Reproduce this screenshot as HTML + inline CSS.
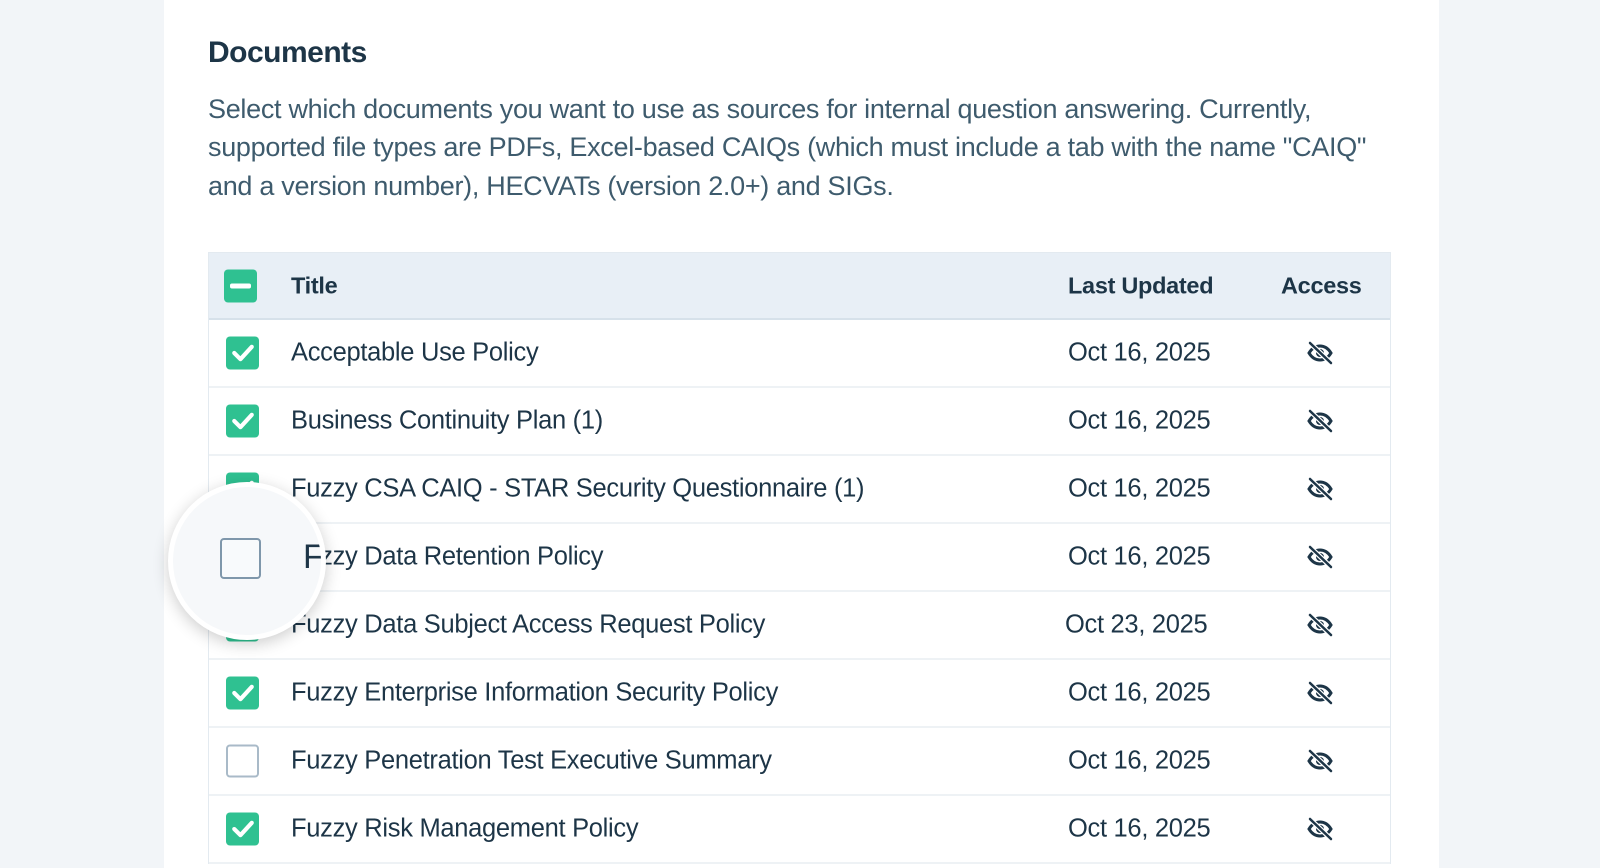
<!DOCTYPE html>
<html><head><style>
*{box-sizing:border-box;margin:0;padding:0}
body{width:1600px;height:868px;overflow:hidden;background:#f2f5f8;font-family:"Liberation Sans",sans-serif;color:#1d3547;position:relative}
.card{position:absolute;left:164px;top:0;width:1275px;height:868px;background:#fff}
h1{position:absolute;left:208px;top:36px;font-size:30px;font-weight:600;letter-spacing:-0.5px;color:#1d3547}
p{position:absolute;left:208px;top:90px;width:1172px;font-size:27px;line-height:38.3px;color:#3e5b6d;letter-spacing:-0.3px}
.tbl{position:absolute;left:208px;top:252px;width:1183px;border:1px solid #e3eaf0;border-bottom:none}
.row{height:68px;border-bottom:2px solid #eef2f5;position:relative;font-size:25.5px;letter-spacing:-0.3px}
.hd{height:67px;background:#e8eff6;border-bottom:2px solid #d6e1ea;font-weight:600;font-size:23.5px}
.row span{position:absolute;top:50%;transform:translateY(-50%)}
.t{left:82px}.d{left:859px}.a{left:1072px}
.cb{position:absolute;left:17px;top:50%;transform:translateY(-50%);width:33px;height:33px;border-radius:4px;background:#2fc191}
.cb.off{background:#fff;border:2px solid #a9bac8}
.eye{position:absolute;left:1097px;top:50%;transform:translateY(-50%)}
.mag{position:absolute;left:168px;top:482px;width:158px;height:158px;border-radius:50%;background:#f6f8fa;border:5px solid #fff;box-shadow:0 4px 16px rgba(0,0,0,.2);overflow:hidden}
</style></head><body>
<div class="card"></div>
<h1>Documents</h1>
<p>Select which documents you want to use as sources for internal question answering. Currently, supported file types are PDFs, Excel-based CAIQs (which must include a tab with the name "CAIQ" and a version number), HECVATs (version 2.0+) and SIGs.</p>
<div class="tbl">
<div class="row hd"><div class="cb" style="left:15px"><div style="position:absolute;left:6px;top:14px;width:21px;height:5px;background:#fff;border-radius:2px"></div></div><span class="t">Title</span><span class="d">Last Updated</span><span class="a">Access</span></div>
</div>
<script>
var rows=[["Acceptable Use Policy","Oct 16, 2025",1],["Business Continuity Plan (1)","Oct 16, 2025",1],["Fuzzy CSA CAIQ - STAR Security Questionnaire (1)","Oct 16, 2025",1],["Fuzzy Data Retention Policy","Oct 16, 2025",0],["Fuzzy Data Subject Access Request Policy","Oct 23, 2025",1],["Fuzzy Enterprise Information Security Policy","Oct 16, 2025",1],["Fuzzy Penetration Test Executive Summary","Oct 16, 2025",0],["Fuzzy Risk Management Policy","Oct 16, 2025",1]];
var eye='<svg class="eye" width="28" height="24" viewBox="0 0 28 24"><path d="M3 12c3-5 7-7 11-7s8 2 11 7c-3 5-7 7-11 7s-8-2-11-7z" fill="none" stroke="#1d3547" stroke-width="3"/><circle cx="14" cy="12" r="4" fill="#1d3547"/><path d="M4 2l21 20" stroke="#fff" stroke-width="5"/><path d="M4 2l21 20" stroke="#1d3547" stroke-width="2.5" stroke-linecap="round"/></svg>';
var chk='<svg width="33" height="33" viewBox="0 0 32 32" style="position:absolute;left:0;top:0"><path d="M8 16l6 6 11-12" fill="none" stroke="#fff" stroke-width="4" stroke-linecap="round" stroke-linejoin="round"/></svg>';
var h='';rows.forEach(function(r){h+='<div class="row"><div class="cb'+(r[2]?'':' off')+'">'+(r[2]?chk:'')+'</div><span class="t">'+r[0]+'</span><span class="d"'+(r[1].indexOf('23')>0?' style="left:856px"':'')+'>'+r[1]+'</span>'+eye+'</div>'});
document.querySelector('.tbl').innerHTML+=h;
</script>
<div class="mag"><div style="position:absolute;left:47px;top:51px;width:41px;height:41px;border:2px solid #7f97ab;border-radius:4px;background:#f8fafc"></div><div style="position:absolute;left:130px;top:51px;font-size:34px;color:#1d3547">F</div></div>
</body></html>
